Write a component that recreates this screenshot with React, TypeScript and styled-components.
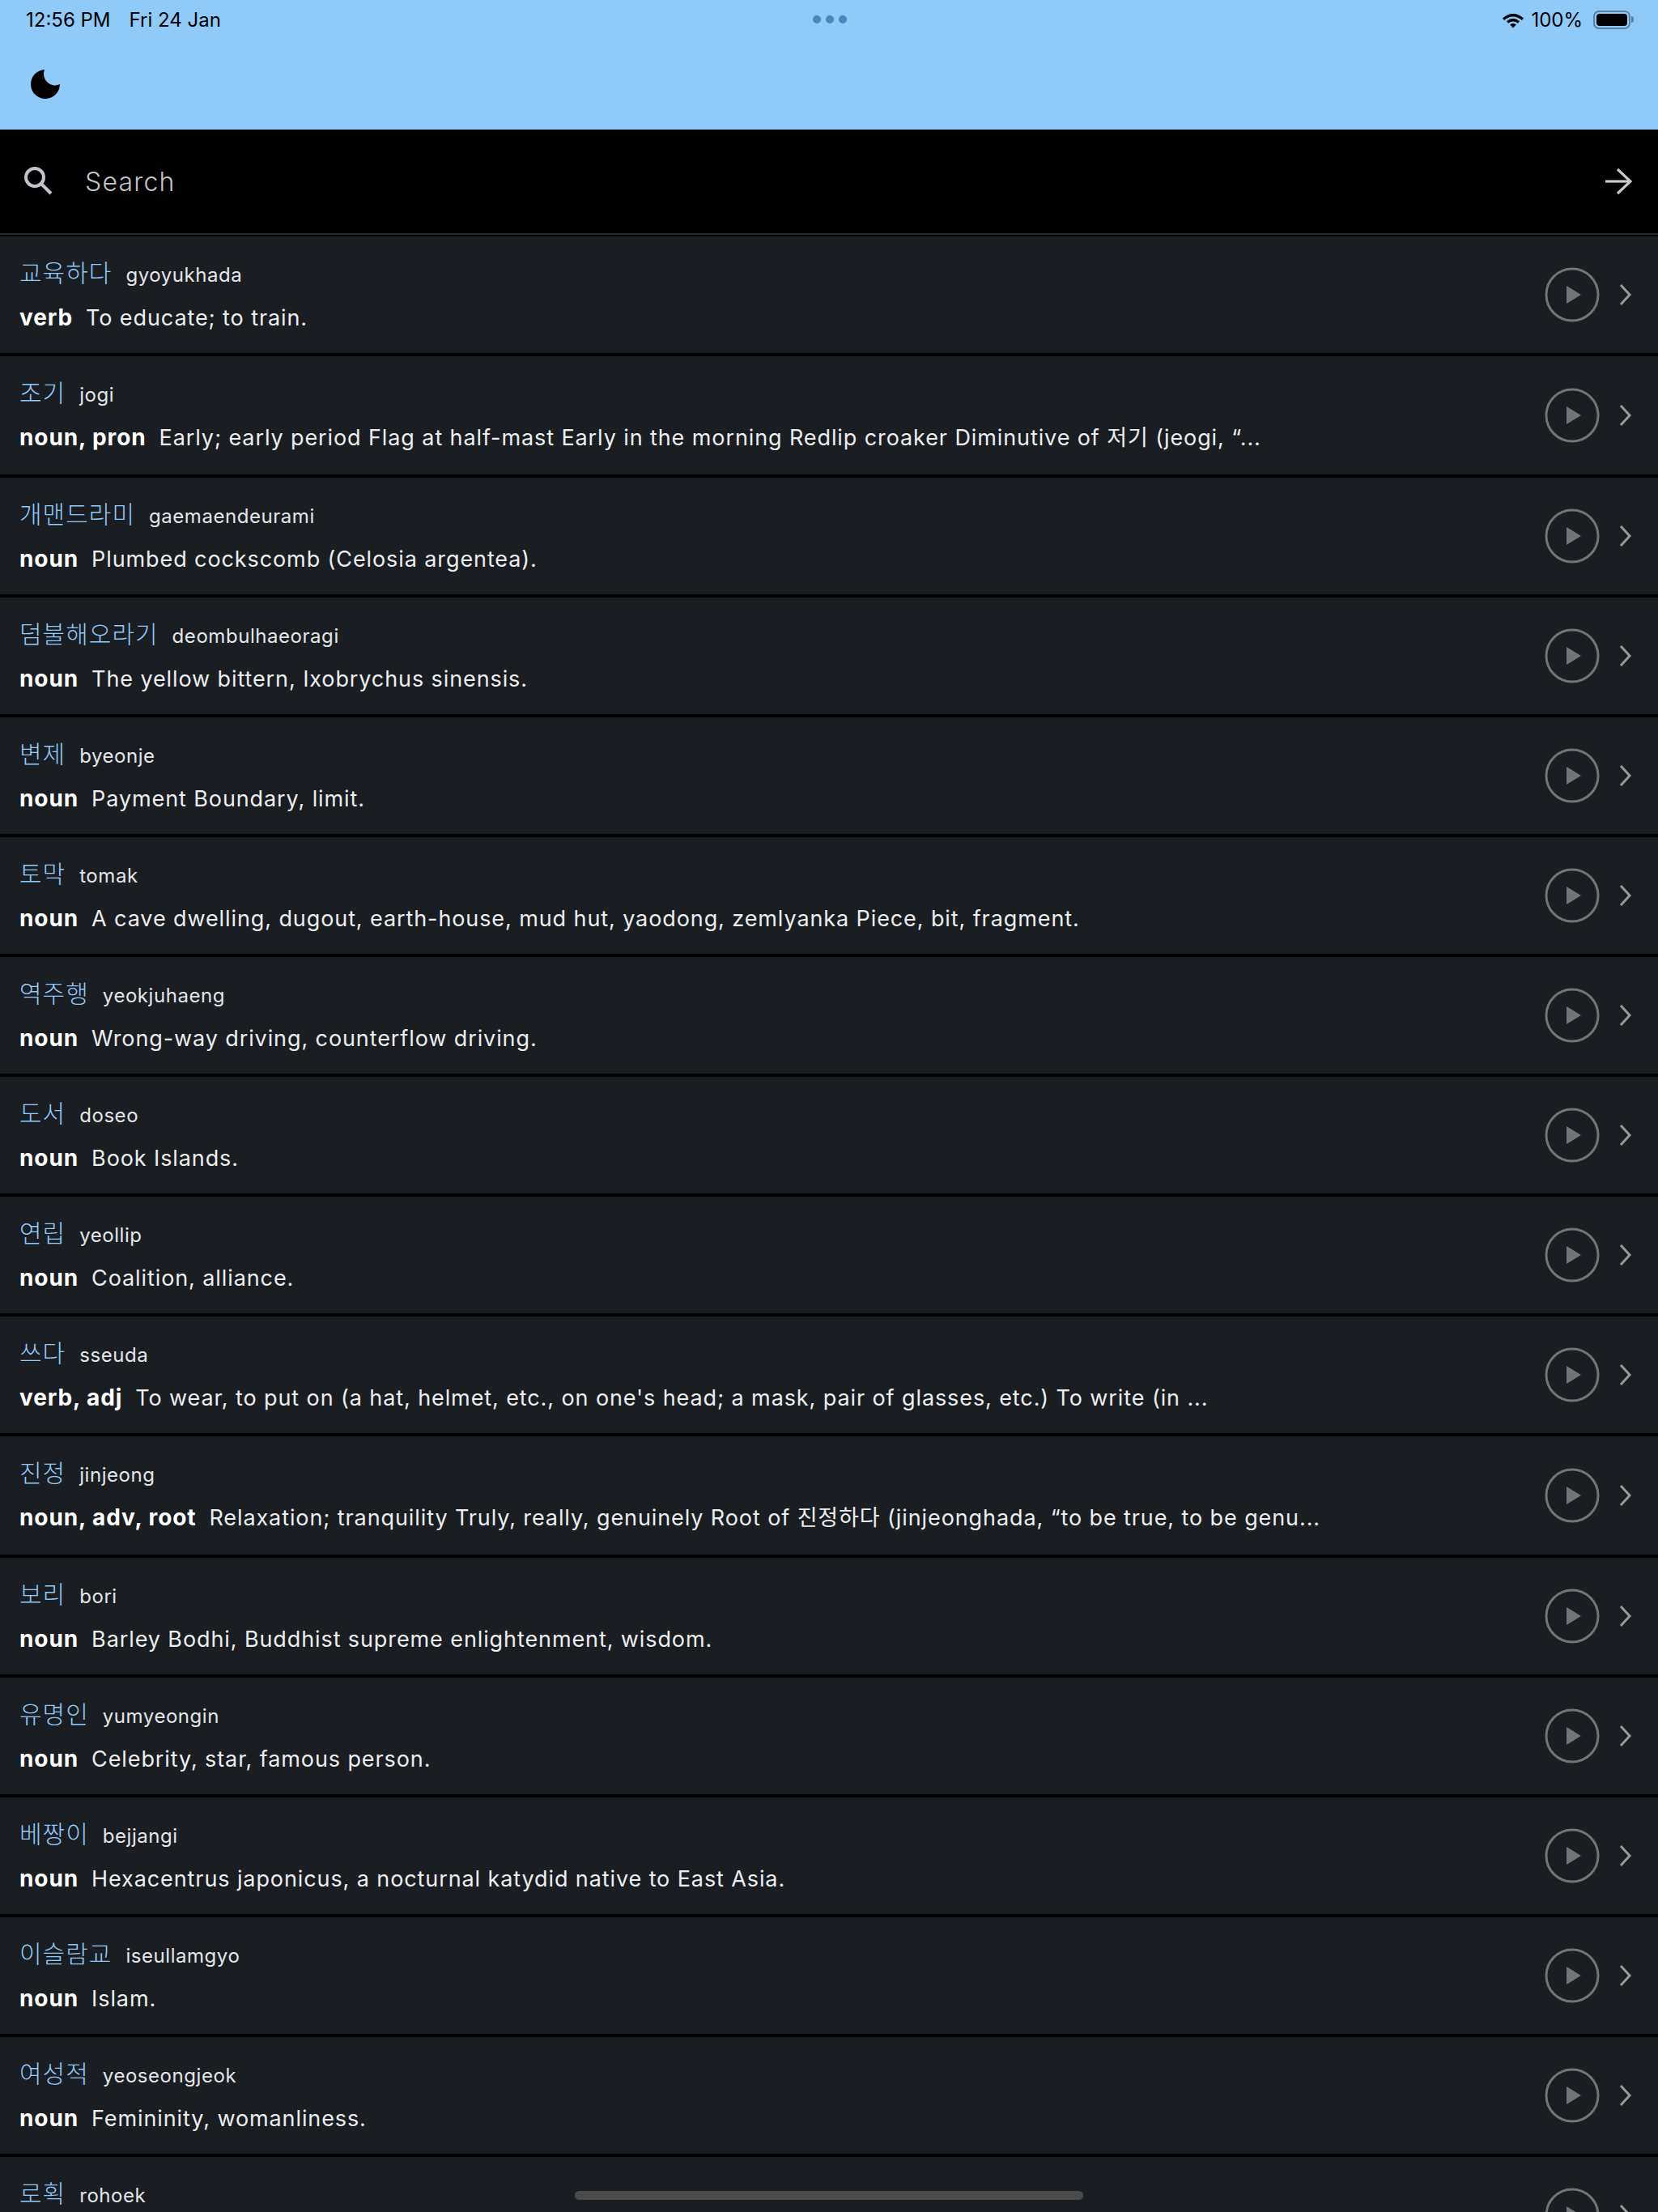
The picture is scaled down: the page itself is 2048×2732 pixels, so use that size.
import styled, { createGlobalStyle } from 'styled-components';

const GlobalStyle = createGlobalStyle`
	html, body {
		margin: 0;
		padding: 0;
		background: #000;
	}
	body {
		font-family: Inter, "Noto Sans CJK KR", sans-serif;
	}
`;

const entries = [
	{ word: '교육하다', roman: 'gyoyukhada', pos: 'verb', def: 'To educate; to train.' },
	{ word: '조기', roman: 'jogi', pos: 'noun, pron', def: 'Early; early period Flag at half-mast Early in the morning Redlip croaker Diminutive of 저기 (jeogi, “...' },
	{ word: '개맨드라미', roman: 'gaemaendeurami', pos: 'noun', def: 'Plumbed cockscomb (Celosia argentea).' },
	{ word: '덤불해오라기', roman: 'deombulhaeoragi', pos: 'noun', def: 'The yellow bittern, Ixobrychus sinensis.' },
	{ word: '변제', roman: 'byeonje', pos: 'noun', def: 'Payment Boundary, limit.' },
	{ word: '토막', roman: 'tomak', pos: 'noun', def: 'A cave dwelling, dugout, earth-house, mud hut, yaodong, zemlyanka Piece, bit, fragment.' },
	{ word: '역주행', roman: 'yeokjuhaeng', pos: 'noun', def: 'Wrong-way driving, counterflow driving.' },
	{ word: '도서', roman: 'doseo', pos: 'noun', def: 'Book Islands.' },
	{ word: '연립', roman: 'yeollip', pos: 'noun', def: 'Coalition, alliance.' },
	{ word: '쓰다', roman: 'sseuda', pos: 'verb, adj', def: "To wear, to put on (a hat, helmet, etc., on one's head; a mask, pair of glasses, etc.) To write (in ..." },
	{ word: '진정', roman: 'jinjeong', pos: 'noun, adv, root', def: 'Relaxation; tranquility Truly, really, genuinely Root of 진정하다 (jinjeonghada, “to be true, to be genu...' },
	{ word: '보리', roman: 'bori', pos: 'noun', def: 'Barley Bodhi, Buddhist supreme enlightenment, wisdom.' },
	{ word: '유명인', roman: 'yumyeongin', pos: 'noun', def: 'Celebrity, star, famous person.' },
	{ word: '베짱이', roman: 'bejjangi', pos: 'noun', def: 'Hexacentrus japonicus, a nocturnal katydid native to East Asia.' },
	{ word: '이슬람교', roman: 'iseullamgyo', pos: 'noun', def: 'Islam.' },
	{ word: '여성적', roman: 'yeoseongjeok', pos: 'noun', def: 'Femininity, womanliness.' },
	{ word: '로획', roman: 'rohoek', pos: 'noun', def: '' },
];

const Page = styled.div`
	position: relative;
	width: 2048px;
	height: 2732px;
	overflow: hidden;
	background: #000;
`;

const Header = styled.header`
	height: 160px;
	box-sizing: border-box;
	background: #90caf9;
	padding: 0 30px 0 32px;
	display: flex;
	flex-direction: column;
`;

const StatusBar = styled.div`
	height: 48px;
	display: grid;
	grid-template-columns: 1fr auto 1fr;
	align-items: center;
	font-size: 24px;
	color: #000;
`;

const StatusGroup = styled.div<{ $gap: number; $end?: boolean }>`
	display: flex;
	align-items: center;
	justify-content: ${({ $end }) => ($end ? 'flex-end' : 'flex-start')};
	gap: ${({ $gap }) => $gap}px;
`;

const Dots = styled.div`
	display: flex;
	gap: 6px;
`;

const Dot = styled.span`
	width: 10px;
	height: 10px;
	border-radius: 50%;
	background: #4a86bd;
`;

const Battery = styled.div`
	display: flex;
	align-items: center;
	gap: 1px;
	margin-left: 5px;
`;

const BatteryShell = styled.div`
	width: 46px;
	height: 23px;
	box-sizing: border-box;
	border: 2px solid #5b82a5;
	border-radius: 7px;
	padding: 2px;
`;

const BatteryFill = styled.div`
	height: 100%;
	background: #000;
	border-radius: 4px;
`;

const BatteryNub = styled.div`
	width: 3px;
	height: 8px;
	background: #5b82a5;
	border-radius: 0 3px 3px 0;
`;

const ThemeToggle = styled.div`
	margin-top: 37px;
	margin-left: 5px;
	height: 38px;
`;

const SearchBar = styled.div`
	height: 128px;
	box-sizing: border-box;
	padding: 0 32px 0 30px;
	display: flex;
	align-items: center;
	background: #000;
`;

const SearchText = styled.span`
	flex: 1;
	margin-left: 39px;
	font-size: 32px;
	font-weight: 300;
	letter-spacing: 1.2px;
	color: #c3c4cb;
`;

const Divider = styled.div`
	height: 2px;
	background: #27282a;
	margin-bottom: 2px;
`;

const List = styled.div`
	display: flex;
	flex-direction: column;
	gap: 4px;
`;

const Row = styled.div`
	background: #1a1d22;
	padding: 0 32px 0 24px;
	display: flex;
	align-items: center;
`;

const RowBody = styled.div<{ $tall: boolean }>`
	flex: 1;
	min-width: 0;
	display: flex;
	flex-direction: column;
	gap: 16px;
	padding: 21px 0 ${({ $tall }) => ($tall ? 29 : 27)}px;
`;

const WordLine = styled.div`
	display: flex;
	align-items: baseline;
	gap: 17px;
	height: 46px;
`;

const Word = styled.span`
	font-size: 30px;
	font-weight: 300;
	letter-spacing: 1px;
	color: #90caf9;
`;

const Roman = styled.span`
	font-size: 24px;
	letter-spacing: 0.55px;
	color: #e4e6ea;
`;

const DefLine = styled.div`
	height: 34px;
	font-size: 27px;
	line-height: 34px;
	letter-spacing: 0.9px;
	color: #eceef0;
	white-space: nowrap;
`;

const Pos = styled.b`
	font-size: 28px;
	font-weight: 700;
	color: #fff;
	margin-right: 16px;
`;

const Actions = styled.div`
	display: flex;
	align-items: center;
	gap: 22px;
`;

const MoonIcon = () => (
	<svg width="38" height="38" viewBox="0 0 38 38">
		<path d="M18 1 A18 18 0 1 0 37 19 A14 14 0 0 1 18 1 Z" fill="#000" />
	</svg>
);

const WifiIcon = () => (
	<svg width="28" height="21" viewBox="0 0 28 21">
		<path d="M14 3 C19 3 23 5 27 8.500 L24.800 11 C21.500 8 18 6.500 14 6.500 C10 6.500 6.500 8 3.200 11 L1 8.500 C5 5 9 3 14 3 Z" fill="#000" />
		<path d="M14 9 C17 9 19.700 10.200 22 12.300 L19.800 14.700 C18 13.200 16.200 12.400 14 12.400 C11.800 12.400 10 13.200 8.200 14.700 L6 12.300 C8.300 10.200 11 9 14 9 Z" fill="#000" />
		<path d="M14 15 C15.500 15 16.700 15.500 17.800 16.500 L14 20.500 L10.200 16.500 C11.300 15.500 12.500 15 14 15 Z" fill="#000" />
	</svg>
);

const SearchIcon = () => (
	<svg width="36" height="36" viewBox="0 0 36 36" fill="none" stroke="#c3c4cb" strokeWidth="4">
		<circle cx="13" cy="13" r="11" />
		<path d="M21 21 L33 33" />
	</svg>
);

const ArrowIcon = () => (
	<svg width="34" height="34" viewBox="0 0 34 34" fill="none" stroke="#c8c9ce" strokeWidth="3.200">
		<path d="M1 17 H32" />
		<path d="M16 2 L32 17 L16 32" />
	</svg>
);

const PlayIcon = () => (
	<svg width="68" height="68" viewBox="0 0 68 68" fill="none">
		<circle cx="34" cy="34" r="32" stroke="#727477" strokeWidth="3" />
		<path d="M27 23 L45 34 L27 45 Z" fill="#727477" />
	</svg>
);

const ChevronIcon = () => (
	<svg width="18" height="30" viewBox="0 0 18 30" fill="none" stroke="#97989b" strokeWidth="3">
		<path d="M4 3 L15 15 L4 27" />
	</svg>
);

const HomeIndicator = styled.div`
	position: absolute;
	left: 710px;
	bottom: 15px;
	width: 628px;
	height: 11px;
	border-radius: 6px;
	background: #4b4b4b;
`;

export default function App() {
	return (
		<Page>
			<GlobalStyle />
			<Header>
				<StatusBar>
					<StatusGroup $gap={23}>
						<span>12:56 PM</span>
						<span>Fri 24 Jan</span>
					</StatusGroup>
					<Dots>
						<Dot />
						<Dot />
						<Dot />
					</Dots>
					<StatusGroup $gap={8} $end>
						<WifiIcon />
						<span>100%</span>
						<Battery>
							<BatteryShell>
								<BatteryFill />
							</BatteryShell>
							<BatteryNub />
						</Battery>
					</StatusGroup>
				</StatusBar>
				<ThemeToggle>
					<MoonIcon />
				</ThemeToggle>
			</Header>
			<SearchBar>
				<SearchIcon />
				<SearchText>Search</SearchText>
				<ArrowIcon />
			</SearchBar>
			<Divider />
			<List>
				{entries.map((entry) => (
					<Row key={entry.word}>
						<RowBody $tall={/[가-힣]/.test(entry.def)}>
							<WordLine>
								<Word>{entry.word}</Word>
								<Roman>{entry.roman}</Roman>
							</WordLine>
							<DefLine>
								<Pos>{entry.pos}</Pos>
								{entry.def}
							</DefLine>
						</RowBody>
						<Actions>
							<PlayIcon />
							<ChevronIcon />
						</Actions>
					</Row>
				))}
			</List>
			<HomeIndicator />
		</Page>
	);
}
